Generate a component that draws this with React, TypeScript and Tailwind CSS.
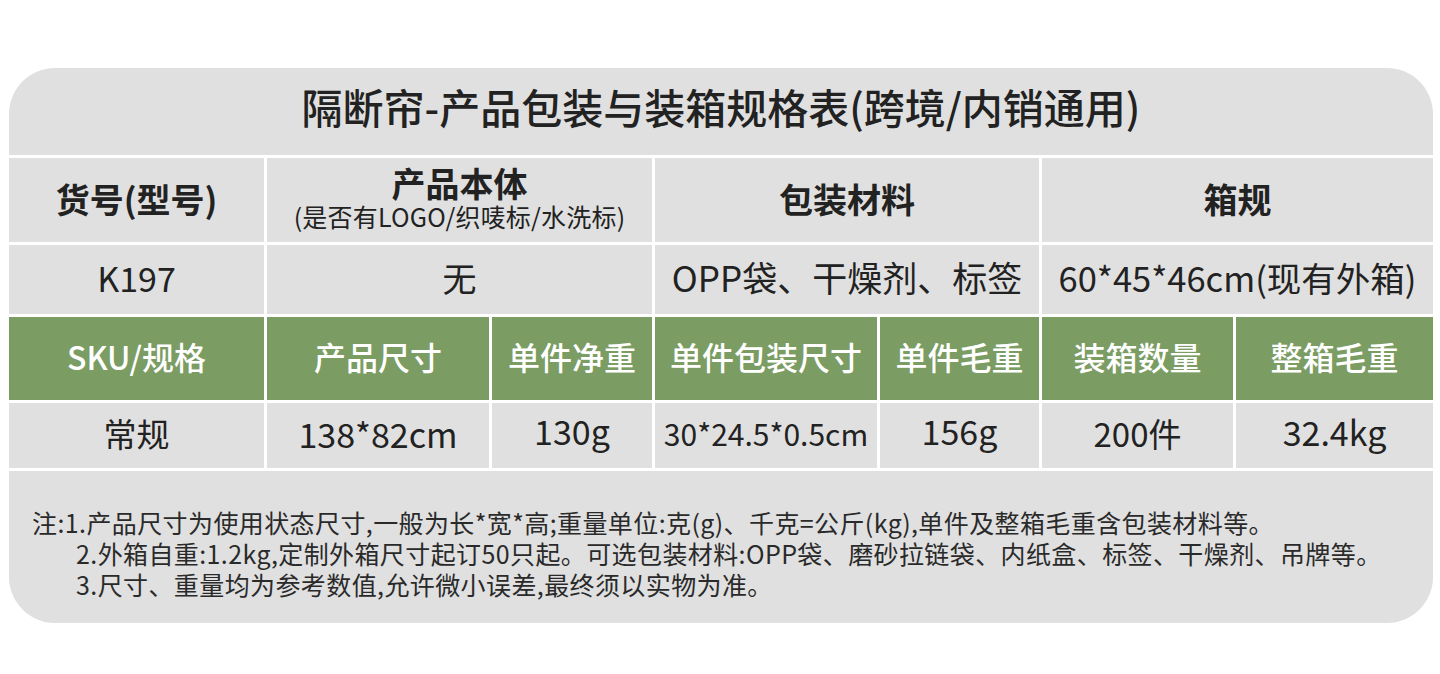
const cell = 'bg-[#e0e0e0] flex items-center justify-center text-[#222] pb-[4px]';
const green = 'bg-[#7b9c62] flex items-center justify-center text-white font-medium text-[32px] pb-[5px]';

const greenHeads = ['SKU/规格', '产品尺寸', '单件净重', '单件包装尺寸', '单件毛重', '装箱数量', '整箱毛重'];

export default function App() {
  return (
    <div
      className="w-[1440px] h-[674px] bg-white pt-[68px] pl-[9px]"
      style={{ fontFamily: '"Noto Sans CJK SC", "Noto Sans", sans-serif' }}
    >
      <div className="w-[1424px] h-[555px] rounded-[46px] overflow-hidden bg-white grid grid-cols-[255px_222px_160px_222px_159px_191px_197px] grid-rows-[87px_84px_69px_83px_65px_152px] gap-[3px]">
        {/* title */}
        <div className="bg-[#e0e0e0] flex items-center justify-center text-[#222] col-span-7 text-[41px] font-medium pb-[9px]">
          隔断帘-产品包装与装箱规格表(跨境/内销通用)
        </div>

        {/* header row */}
        <div className={`${cell} text-[34px] font-bold`}>货号(型号)</div>
        <div className={`${cell} col-span-2 flex-col`}>
          <span className="text-[34px] font-bold leading-[36px]">产品本体</span>
          <span className="text-[25px] leading-[30px] tracking-[0.2px]">(是否有LOGO/织唛标/水洗标)</span>
        </div>
        <div className={`${cell} col-span-2 text-[34px] font-bold`}>包装材料</div>
        <div className={`${cell} col-span-2 text-[34px] font-bold`}>箱规</div>

        {/* info row */}
        <div className={`${cell} text-[34px]`}>K197</div>
        <div className={`${cell} col-span-2 text-[34px]`}>无</div>
        <div className={`${cell} col-span-2 text-[35px]`}>OPP袋、干燥剂、标签</div>
        <div className={`${cell} col-span-2 text-[34.5px]`}>60*45*46cm(现有外箱)</div>

        {/* green header */}
        {greenHeads.map((h) => (
          <div key={h} className={green}>
            {h}
          </div>
        ))}

        {/* data row */}
        <div className={`${cell} text-[33px]`}>常规</div>
        <div className={`${cell} text-[34px]`}>138*82cm</div>
        <div className={`${cell} text-[34px] pb-[10px]`}>130g</div>
        <div className={`${cell} text-[30px]`}>30*24.5*0.5cm</div>
        <div className={`${cell} text-[34px] pb-[10px]`}>156g</div>
        <div className={`${cell} text-[33px]`}>200件</div>
        <div className={`${cell} text-[34px] pb-[8px]`}>32.4kg</div>

        {/* notes */}
        <div className="col-span-7 bg-[#e0e0e0] pt-[36px] pl-[23px] text-[25px] leading-[31px] tracking-[0.4px] text-[#2a2a2a]">
          <p>注:1.产品尺寸为使用状态尺寸,一般为长*宽*高;重量单位:克(g)、千克=公斤(kg),单件及整箱毛重含包装材料等。</p>
          <p className="pl-[44px]">2.外箱自重:1.2kg,定制外箱尺寸起订50只起。可选包装材料:OPP袋、磨砂拉链袋、内纸盒、标签、干燥剂、吊牌等。</p>
          <p className="pl-[44px]">3.尺寸、重量均为参考数值,允许微小误差,最终须以实物为准。</p>
        </div>
      </div>
    </div>
  );
}
